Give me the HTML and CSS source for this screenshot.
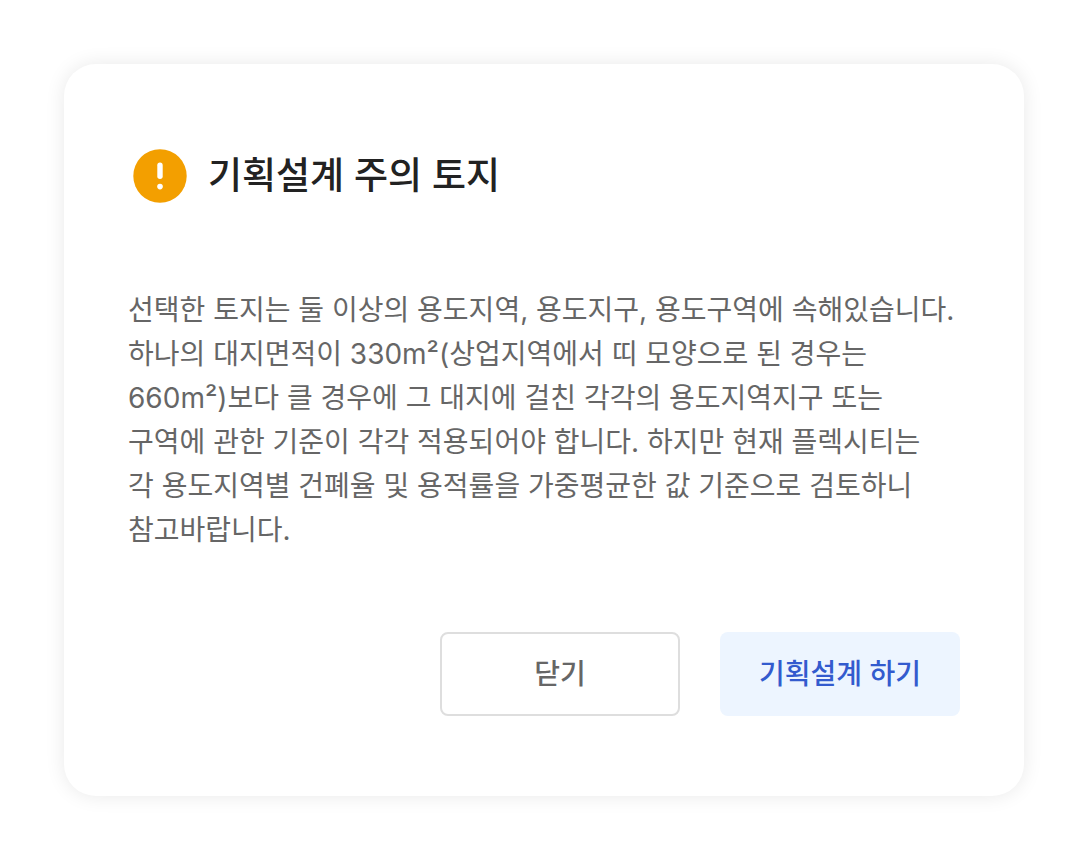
FILE: index.html
```html
<!DOCTYPE html>
<html lang="ko">
  <head>
    <meta charset="UTF-8" />
    <meta name="viewport" content="width=device-width, initial-scale=1" />
    <title>기획설계 주의 토지</title>
    <link rel="stylesheet" href="styles.css">
  </head>
  <body>
    <main class="modal" role="dialog" aria-labelledby="modal-title">
      <header class="modal-header">
        <svg class="modal-icon" viewBox="0 0 64 64" aria-hidden="true">
          <circle cx="32" cy="32" r="26.7" fill="#f39f00" />
          <path d="M32 21.3v10.9" stroke="#fff" stroke-width="5.4" stroke-linecap="round" />
          <circle cx="32" cy="42.6" r="2.8" fill="#fff" />
        </svg>
        <h1 class="modal-title" id="modal-title">기획설계 주의 토지</h1>
      </header>

      <p class="modal-text">
        선택한 토지는 둘 이상의 용도지역, 용도지구, 용도구역에 속해있습니다.<br>
        하나의 대지면적이 330m²(상업지역에서 띠 모양으로 된 경우는<br>
        660m²)보다 클 경우에 그 대지에 걸친 각각의 용도지역지구 또는<br>
        구역에 관한 기준이 각각 적용되어야 합니다. 하지만 현재 플렉시티는<br>
        각 용도지역별 건폐율 및 용적률을 가중평균한 값 기준으로 검토하니<br>
        참고바랍니다.
      </p>

      <footer class="modal-actions">
        <button class="btn btn-outline" type="button">닫기</button>
        <button class="btn btn-primary" type="button">기획설계 하기</button>
      </footer>
    </main>
  </body>
</html>
```
FILE: styles.css
```css
* {
  box-sizing: border-box;
}

body {
  margin: 0;
  padding: 64px;
  background-color: #fff;
  font-family: Inter, "Noto Sans CJK KR", sans-serif;
}

.modal {
  padding: 80px 64px;
  border-radius: 32px;
  background-color: #fff;
  box-shadow: 0 0 20px rgba(0, 0, 0, 0.09);
}

.modal-header {
  display: flex;
  align-items: center;
  gap: 16px;
}

.modal-icon {
  flex: none;
  width: 64px;
  height: 64px;
}

.modal-title {
  margin: 0;
  color: #222;
  font-size: 37px;
  font-weight: 500;
  line-height: 64px;
}

.modal-text {
  margin: 80px 0;
  color: #666;
  font-size: 28px;
  line-height: 44px;
  white-space: nowrap;
}

.modal-actions {
  display: flex;
  justify-content: flex-end;
  gap: 40px;
}

.btn {
  width: 240px;
  height: 84px;
  padding: 0 0 4px;
  border: 2px solid transparent;
  border-radius: 8px;
  font-family: inherit;
  font-size: 28px;
  font-weight: 500;
  cursor: pointer;
}

.btn-outline {
  border-color: #dedede;
  background-color: #fff;
  color: #666;
}

.btn-primary {
  background-color: #edf5ff;
  color: #335bce;
}
```
